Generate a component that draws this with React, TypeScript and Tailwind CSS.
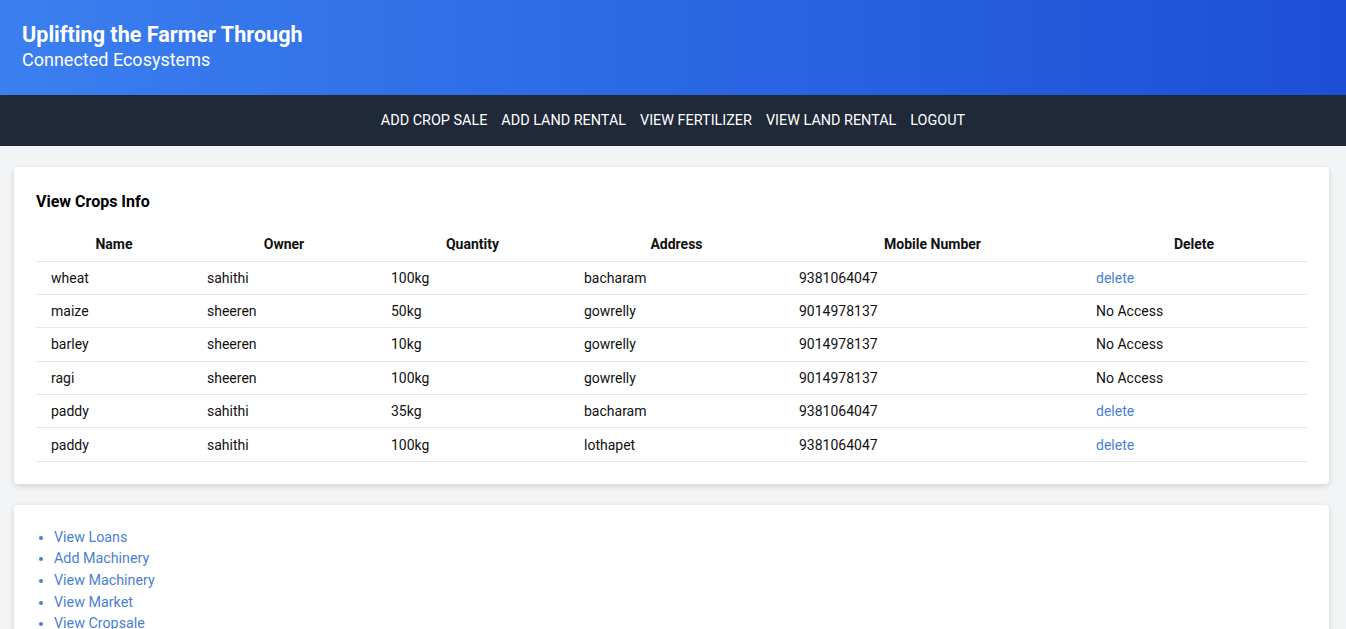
import React from 'react';

const crops = [
    { name: 'wheat', owner: 'sahithi', qty: '100kg', address: 'bacharam', mobile: '9381064047', own: true },
    { name: 'maize', owner: 'sheeren', qty: '50kg', address: 'gowrelly', mobile: '9014978137', own: false },
    { name: 'barley', owner: 'sheeren', qty: '10kg', address: 'gowrelly', mobile: '9014978137', own: false },
    { name: 'ragi', owner: 'sheeren', qty: '100kg', address: 'gowrelly', mobile: '9014978137', own: false },
    { name: 'paddy', owner: 'sahithi', qty: '35kg', address: 'bacharam', mobile: '9381064047', own: true },
    { name: 'paddy', owner: 'sahithi', qty: '100kg', address: 'lothapet', mobile: '9381064047', own: true },
]

const links = ['View Loans', 'Add Machinery', 'View Machinery', 'View Market', 'View Cropsale']

export default function App() {
    return (
        <div className="min-h-screen bg-gray-100 font-['Roboto',sans-serif]">
            <header className="h-[95px] bg-gradient-to-r from-[#3b7ff0] to-[#1d4fd6] px-[22px] pt-[21px] text-white">
                <h1 className="text-[21.6px] font-bold leading-[28px]">Uplifting the Farmer Through</h1>
                <p className="text-[18px] leading-[22px]">Connected Ecosystems</p>
            </header>

            <nav className="h-[51px] bg-[#1f2937] flex items-center justify-center gap-[14px] text-white text-[14.4px]">
                <a href="#">ADD CROP SALE</a>
                <a href="#">ADD LAND RENTAL</a>
                <a href="#">VIEW FERTILIZER</a>
                <a href="#">VIEW LAND RENTAL</a>
                <a href="#">LOGOUT</a>
            </nav>

            <main className="px-[14px] pt-[21px] pr-[17px]">
                <section className="bg-white rounded-sm shadow-[0_2px_6px_rgba(0,0,0,0.15)] px-[22px] pt-[22px] pb-[22px]">
                    <h2 className="text-[16px] font-bold leading-[24px] pt-[1px] text-black">View Crops Info</h2>
                    <table className="w-full mt-[14px] text-[14px] text-[#111] table-fixed">
                        <colgroup>
                            <col className="w-[156px]" />
                            <col className="w-[184px]" />
                            <col className="w-[193px]" />
                            <col className="w-[215px]" />
                            <col className="w-[297px]" />
                            <col />
                        </colgroup>
                        <thead>
                            <tr className="h-[33px]">
                                <th className="font-bold pt-[1px]">Name</th>
                                <th className="font-bold pt-[1px]">Owner</th>
                                <th className="font-bold pt-[1px]">Quantity</th>
                                <th className="font-bold pt-[1px]">Address</th>
                                <th className="font-bold pt-[1px]">Mobile Number</th>
                                <th className="font-bold pt-[1px]">Delete</th>
                            </tr>
                        </thead>
                        <tbody>
                            {crops.map((c, i) => (
                                <tr key={i} className="h-[33.4px] border-y border-[#e5e7eb]">
                                    <td className="px-[15px] pt-[1px]">{c.name}</td>
                                    <td className="px-[15px] pt-[1px]">{c.owner}</td>
                                    <td className="px-[15px] pt-[1px]">{c.qty}</td>
                                    <td className="px-[15px] pt-[1px]">{c.address}</td>
                                    <td className="px-[15px] pt-[1px]">{c.mobile}</td>
                                    <td className="px-[15px] pt-[1px]">
                                        {c.own ? <a href="#" className="text-[#4a7fd4]">delete</a> : 'No Access'}
                                    </td>
                                </tr>
                            ))}
                        </tbody>
                    </table>
                </section>

                <section className="mt-[21px] bg-white rounded-sm shadow-[0_2px_6px_rgba(0,0,0,0.15)] px-[22px] pt-[22px] pb-[22px]">
                    <ul className="list-disc pl-[18px] text-[14.3px] text-[#4a7fd4] marker:text-[#4a7fd4]">
                        {links.map((l) => (
                            <li key={l} className="leading-[21.6px]">
                                <a href="#">{l}</a>
                            </li>
                        ))}
                    </ul>
                </section>
            </main>
        </div>
    );
}
